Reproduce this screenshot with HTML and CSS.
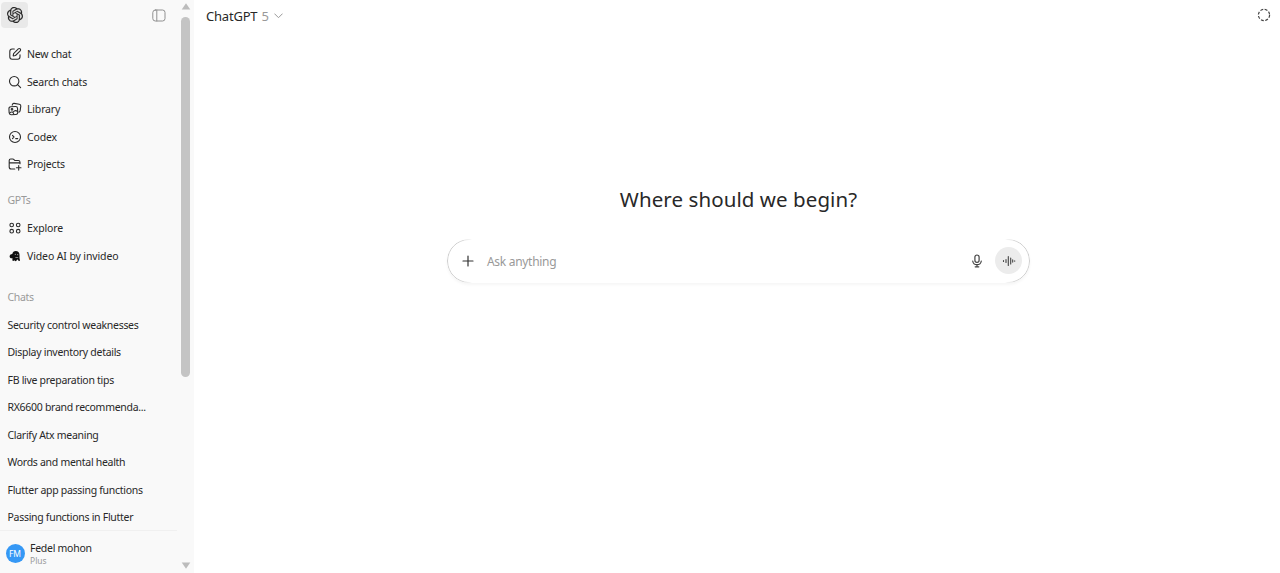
FILE: index.html
```html
<!DOCTYPE html>
<html lang="en">
<head>
<meta charset="utf-8">
<title>ChatGPT</title>
<link rel="stylesheet" href="styles.css">
</head>
<body>
<div class="app">
  <aside class="sidebar">
    <div class="side-content">
      <div class="side-head">
        <span class="logo"><svg width="16" height="16" viewBox="0 0 24 24" fill="currentColor" stroke="currentColor" stroke-width=".3"><path d="M22.2819 9.8211a5.9847 5.9847 0 0 0-.5157-4.9108 6.0462 6.0462 0 0 0-6.5098-2.9A6.0651 6.0651 0 0 0 4.9807 4.1818a5.9847 5.9847 0 0 0-3.9977 2.9 6.0462 6.0462 0 0 0 .7427 7.0966 5.98 5.98 0 0 0 .511 4.9107 6.051 6.051 0 0 0 6.5146 2.9001A5.9847 5.9847 0 0 0 13.2599 24a6.0557 6.0557 0 0 0 5.7718-4.2058 5.9894 5.9894 0 0 0 3.9977-2.9001 6.0557 6.0557 0 0 0-.7475-7.0729zm-9.022 12.6081a4.4755 4.4755 0 0 1-2.8764-1.0408l.1419-.0804 4.7783-2.7582a.7948.7948 0 0 0 .3927-.6813v-6.7369l2.02 1.1686a.071.071 0 0 1 .038.052v5.5826a4.504 4.504 0 0 1-4.4945 4.4944zm-9.6607-4.1254a4.4708 4.4708 0 0 1-.5346-3.0137l.142.0852 4.783 2.7582a.7712.7712 0 0 0 .7806 0l5.8428-3.3685v2.3324a.0804.0804 0 0 1-.0332.0615L9.74 19.9502a4.4992 4.4992 0 0 1-6.1408-1.6464zM2.3408 7.8956a4.485 4.485 0 0 1 2.3655-1.9728V11.6a.7664.7664 0 0 0 .3879.6765l5.8144 3.3543-2.0201 1.1685a.0757.0757 0 0 1-.071 0l-4.8303-2.7865A4.504 4.504 0 0 1 2.3408 7.872zm16.5963 3.8558L13.1038 8.364 15.1192 7.2a.0757.0757 0 0 1 .071 0l4.8303 2.7913a4.4944 4.4944 0 0 1-.6765 8.1042v-5.6772a.79.79 0 0 0-.407-.667zm2.0107-3.0231l-.142-.0852-4.7735-2.7818a.7759.7759 0 0 0-.7854 0L9.409 9.2297V6.8974a.0662.0662 0 0 1 .0284-.0615l4.8303-2.7866a4.4992 4.4992 0 0 1 6.6802 4.66zM8.3065 12.863l-2.02-1.1638a.0804.0804 0 0 1-.038-.0567V6.0742a4.4992 4.4992 0 0 1 7.3757-3.4537l-.142.0805L8.704 5.459a.7948.7948 0 0 0-.3927.6813zm1.0976-2.3654l2.602-1.4998 2.6069 1.4998v2.9994l-2.5974 1.4997-2.6067-1.4997Z"/></svg></span>
        <svg class="toggle" width="14" height="13" viewBox="0 0 14 13"><rect x=".8" y="1" width="12.2" height="11" rx="2.5"/><path d="M4.8 1v11"/></svg>
      </div>
      <nav class="nav">
        <a class="row"><svg class="icon" viewBox="0 0 14 14"><path d="M6.3 2H4.2A2.4 2.4 0 0 0 1.800 4.400v5.400a2.400 2.400 0 0 0 2.400 2.400h5.400a2.400 2.400 0 0 0 2.400-2.400V7.700"/><path d="M5.200 8.900l.4-2.300 4.700-4.700a1.320 1.320 0 0 1 1.900 1.900L7.500 8.500z"/></svg><span>New chat</span></a>
        <a class="row"><svg class="icon" viewBox="0 0 14 14"><circle cx="6.200" cy="6.200" r="4.700"/><path d="M9.600 9.600l3 3"/></svg><span>Search chats</span></a>
        <a class="row"><svg class="icon" viewBox="0 0 14 14"><rect x="1" y="4.600" width="8.600" height="8" rx="2" transform="rotate(-3 5 8)"/><path d="M4.200 3.100l.2-.6a1.500 1.500 0 0 1 1.700-1.100l5.200.8a1.800 1.800 0 0 1 1.500 2l-.7 4.600a1.500 1.500 0 0 1-1.200 1.300"/><circle cx="4" cy="7.300" r=".8"/><path d="M1.600 11.200c2-2.200 3.500-1.200 4.200 1M5.200 10c1.500-1.800 3.200-1.600 4.200-.5"/></svg><span>Library</span></a>
        <a class="row"><svg class="icon" viewBox="0 0 14 14"><circle cx="7" cy="7" r="5.500"/><path d="M4.500 5.400L6 7 4.500 8.600M7.700 8.600h2"/></svg><span>Codex</span></a>
        <a class="row"><svg class="icon" viewBox="0 0 14 14"><path d="M6.800 12H3.200a2 2 0 0 1-2-2V3.500a1.500 1.500 0 0 1 1.500-1.500h2c.7 0 1 .2 1.400.7l.3.400c.3.300.6.400 1 .4h2.900a1.700 1.700 0 0 1 1.700 1.700v1.600M1.200 5.900h10.700M10.700 8.500v4.600M8.400 10.800H13"/></svg><span>Projects</span></a>
      </nav>
      <section class="gpts">
        <h2 class="label">GPTs</h2>
        <a class="row"><svg class="icon" viewBox="0 0 14 14"><circle cx="3.700" cy="4" r="1.800"/><circle cx="10.200" cy="4" r="1.800"/><circle cx="3.700" cy="10.200" r="1.800"/><circle cx="10.200" cy="10.200" r="1.800"/></svg><span>Explore</span></a>
        <a class="row"><svg class="icon" viewBox="0 0 14 14"><path class="solid" d="M4.300 5C4.600 3 5.900 2 7.700 2c2.300 0 3.800 1.600 3.800 3.800v3.400c0 .8.5 1.400.5 2.100 0 .9-.9 1-1.400.5L9.200 10.300l-.6 1.300c-.4.800-1.200.8-1.800.2l-.5-.6-.6.500c-.7.500-1.300.1-1.300-.7V8.900c-1 .6-2.300.1-2.700-1C1.300 6.600 2.500 5 4.300 5z"/><circle class="eye" cx="7.300" cy="5.300" r=".6"/><circle class="eye" cx="9.700" cy="5.700" r=".6"/><path class="eye" d="M7.400 8l2.900.3-.2.700-2.700-.3z"/></svg><span>Video AI by invideo</span></a>
      </section>
      <section class="chats">
        <h2 class="label">Chats</h2>
        <a class="row">Security control weaknesses</a>
        <a class="row">Display inventory details</a>
        <a class="row">FB live preparation tips</a>
        <a class="row">RX6600 brand recommenda...</a>
        <a class="row">Clarify Atx meaning</a>
        <a class="row">Words and mental health</a>
        <a class="row">Flutter app passing functions</a>
        <a class="row">Passing functions in Flutter</a>
      </section>
      <footer class="account">
        <span class="avatar">FM</span>
        <div><div class="name">Fedel mohon</div><div class="plan">Plus</div></div>
      </footer>
    </div>
    <div class="scrollbar">
      <svg width="10" height="7" viewBox="0 0 10 7"><path d="M5 .3L9.300 6.500H.7z"/></svg>
      <div class="thumb"></div>
      <svg width="10" height="7" viewBox="0 0 10 7"><path d="M5 6.700L9.300.5H.7z"/></svg>
    </div>
  </aside>
  <main class="main">
    <header class="topbar">
      <div class="model"><span>ChatGPT</span><span class="version">5</span><svg width="9" height="6" viewBox="0 0 9 6"><path d="M.7.900l3.800 3.800L8.300.900"/></svg></div>
      <svg class="temp" width="14" height="14" viewBox="0 0 14 14"><circle cx="7" cy="7" r="5.600"/></svg>
    </header>
    <div class="hero">
      <h1 class="title">Where should we begin?</h1>
      <div class="composer">
        <svg class="plus" width="12" height="12" viewBox="0 0 12 12"><path d="M6 1v10M1 6h10"/></svg>
        <span class="placeholder">Ask anything</span>
        <svg class="mic" width="12" height="14" viewBox="0 0 12 14"><rect x="3.900" y="1" width="4.200" height="7.400" rx="2.100"/><path d="M1.700 7a4.350 4.350 0 0 0 8.600 0M6 10.500v2.300M4.200 12.800h3.600"/></svg>
        <span class="voice"><svg width="14" height="14" viewBox="0 0 14 14"><path d="M1.500 6.600v.8M4 5.500v3M6.300 2.500v9M8.700 4v6M10.700 5.900v2.200M12.700 6.700v.6"/></svg></span>
      </div>
    </div>
  </main>
</div>
</body>
</html>
```
FILE: styles.css
```css
* { box-sizing: border-box; }
body {
  margin: 0;
  background: #fff;
  color: #282828;
  font-family: "Noto Sans", "Open Sans", sans-serif;
  overflow: hidden;
}
h1, h2 { margin: 0; font-weight: 400; }
svg { fill: none; flex: none; stroke-linecap: round; stroke-linejoin: round; }
.app { display: flex; height: 573px; }

.sidebar { display: flex; width: 194px; background: #f9f9f9; }
.side-content { display: flex; flex-direction: column; width: 177px; }
.side-head {
  display: flex;
  flex: none;
  justify-content: space-between;
  height: 40.5px;
  padding: 2px 11px 0 1px;
}
.logo {
  display: flex;
  align-items: center;
  justify-content: center;
  width: 27px;
  height: 26px;
  border-radius: 4px;
  background: #e9e9e9;
}
.logo svg { fill: currentColor; }
.toggle { margin-top: 7px; stroke: #909090; }
.row {
  display: flex;
  align-items: center;
  gap: 5.500px;
  height: 27.5px;
  padding-left: 7.500px;
  font-size: 10.500px;
  letter-spacing: -.18px;
  white-space: nowrap;
}
.icon { width: 14px; height: 14px; stroke: #2b2b2b; stroke-width: 1.1; }
.gpts .row { letter-spacing: -.12px; }
.solid { fill: #111; stroke: none; }
.eye { fill: #aaa; stroke: none; }
.label {
  height: 27.5px;
  padding-left: 7.500px;
  color: #999;
  font-size: 10.500px;
  line-height: 27.5px;
  letter-spacing: -.3px;
}
.gpts { padding-top: 9px; }
.chats { padding-top: 14px; }
.chats .row { letter-spacing: -.29px; }
.account {
  display: flex;
  flex: none;
  gap: 5.500px;
  margin-top: -1px;
  height: 43px;
  padding: 11px 0 0 5.500px;
  border-top: 1px solid #f0f0f0;
}
.avatar {
  width: 19px;
  height: 19px;
  margin-top: 2px;
  border-radius: 50%;
  background: #3598f5;
  color: #fff;
  font-size: 8.500px;
  line-height: 19px;
  text-align: center;
}
.name { font-size: 10.500px; line-height: 13px; letter-spacing: -.27px; }
.plan { color: #999; font-size: 8.500px; line-height: 12px; }
.scrollbar {
  display: flex;
  flex-direction: column;
  align-items: center;
  width: 17px;
  padding: 3px 0 4px;
}
.scrollbar svg { fill: #bcbcbc; }
.thumb { width: 9px; height: 360px; margin: 7px 0 auto; border-radius: 5px; background: #c4c4c4; }

.main { flex: 1; display: flex; flex-direction: column; }
.topbar { display: flex; justify-content: space-between; height: 32px; padding: 0 9px 0 12px; }
.model { display: flex; align-items: center; height: 32px; font-size: 13px; letter-spacing: -.2px; }
.version { margin: 0 5px 0 4px; color: #999; }
.model svg { stroke: #999; }
.temp { margin-top: 8px; stroke: #444; stroke-width: 1.2; stroke-dasharray: 2.9 1.5; stroke-linecap: butt; }
.hero { display: flex; flex-direction: column; align-items: center; padding: 151px 0 0 3px; }
.title { height: 32px; font-size: 20.500px; line-height: 32px; letter-spacing: .08px; }
.composer {
  position: relative;
  display: flex;
  align-items: center;
  width: 583px;
  height: 44px;
  margin-top: 24px;
  padding: 0 8px 1px 15px;
  border-radius: 22px;
  box-shadow: 0 2px 3px rgba(0, 0, 0, .04);
}
.composer::before {
  content: "";
  position: absolute;
  inset: 0;
  border: 1px solid #ccc;
  border-radius: 22px;
  mask-image: linear-gradient(90deg, #000 14px, transparent 25px, transparent 558px, #000 569px);
}
.plus { stroke: #333; stroke-width: 1.2; }
.placeholder { flex: 1; padding: 2px 0 0 13px; color: #999; font-size: 12px; letter-spacing: -.3px; }
.mic { margin-right: 12px; stroke: #444; stroke-width: 1.2; }
.voice {
  display: flex;
  align-items: center;
  justify-content: center;
  width: 27px;
  height: 27px;
  border-radius: 50%;
  background: #ececec;
}
.voice svg { stroke: #444; stroke-width: 1.1; }
```
